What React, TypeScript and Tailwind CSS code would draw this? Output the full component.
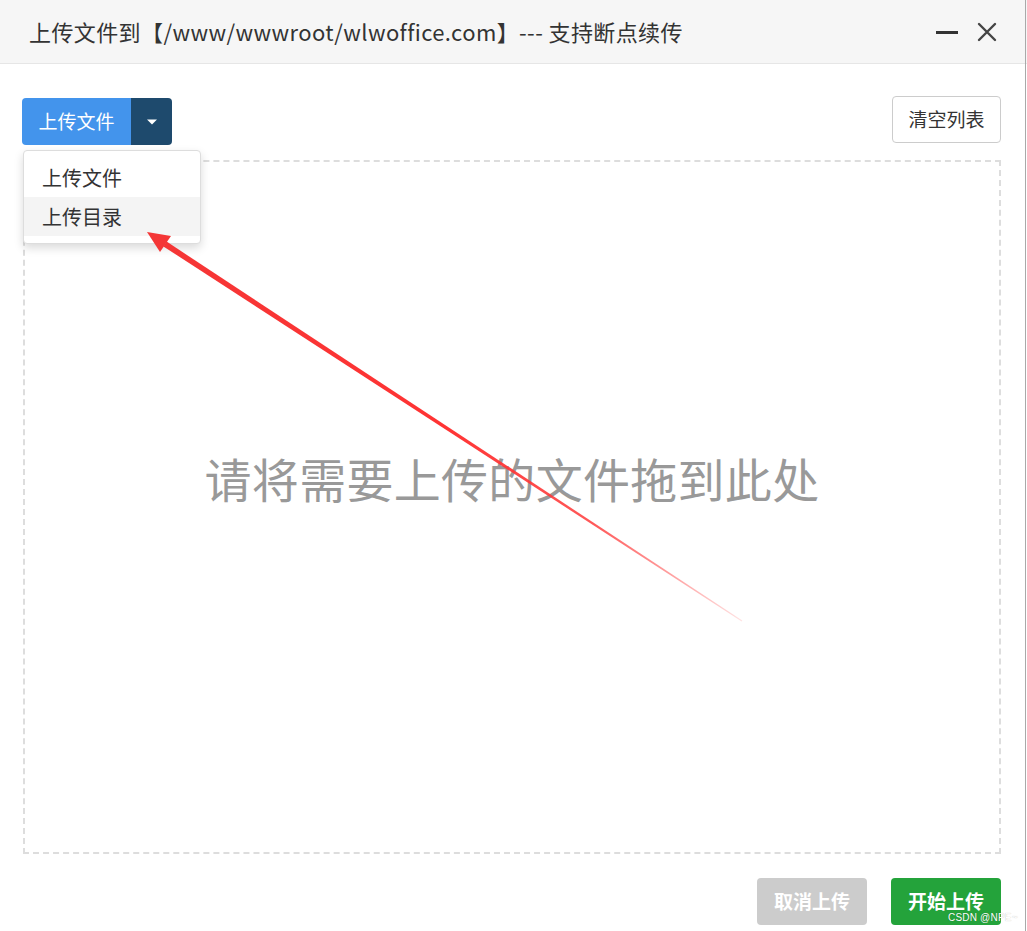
import React from "react";

const font = { fontFamily: '"Noto Sans CJK SC", "Noto Sans", sans-serif' };

export default function App() {
  return (
    <div className="relative w-[1027px] h-[931px] bg-white overflow-hidden" style={font}>
      {/* window right border */}
      <div className="absolute right-[1px] top-0 bottom-0 w-[1px] bg-[#a9a9a9]" />
      {/* title bar */}
      <div className="h-[64px] bg-[#f6f6f6] border-b border-[#e6e6e6] flex items-center pl-[29px] pr-[30px]">
        <div className="text-[22px] text-[#333] tracking-[0.4px]">上传文件到【/www/wwwroot/wlwoffice.com】--- 支持断点续传</div>
        <div className="ml-auto flex items-center gap-[18px]">
          <svg width="24" height="20" viewBox="0 0 24 20">
            <rect x="1" y="9" width="22" height="3" fill="#333" />
          </svg>
          <svg width="20" height="20" viewBox="0 0 20 20">
            <path d="M2 2 L18 18 M18 2 L2 18" stroke="#444" strokeWidth="2.4" strokeLinecap="round" />
          </svg>
        </div>
      </div>

      {/* body */}
      <div className="pl-[22px] pr-[26px]">
        <div className="flex items-start justify-between pt-[32px]">
          <div className="flex mt-[2px] h-[47px] rounded-[4px] overflow-hidden">
            <div className="w-[109px] bg-[#4394ec] text-white text-[19px] flex items-center justify-center">上传文件</div>
            <div className="w-[41px] bg-[#1e4a6d] flex items-center justify-center">
              <svg width="12" height="8" viewBox="0 0 12 8">
                <path d="M1 1.5 L11 1.5 L6 6.5 Z" fill="#fff" />
              </svg>
            </div>
          </div>
          <div className="w-[109px] h-[47px] border border-[#cccccc] rounded-[4px] text-[19px] text-[#333] flex items-center justify-center">清空列表</div>
        </div>

        <div className="mt-[15px] ml-[1px] w-[978px] h-[694px] border-2 border-dashed border-[#dddddd] flex justify-center pt-[288px]">
          <div className="text-[47px] leading-[1.2] text-[#999999] tracking-[0.3px]">请将需要上传的文件拖到此处</div>
        </div>

        <div className="flex justify-end gap-[24px] mt-[24px]">
          <div className="w-[110px] h-[47px] rounded-[4px] bg-[#cccccc] text-white text-[19px] font-bold flex items-center justify-center">取消上传</div>
          <div className="w-[110px] h-[47px] rounded-[4px] bg-[#24a33b] text-white text-[19px] font-bold flex items-center justify-center">开始上传</div>
        </div>
      </div>

      {/* dropdown menu */}
      <div className="absolute left-[23px] top-[150px] w-[178px] bg-white border border-[#dddddd] rounded-[4px] shadow-[0_4px_10px_rgba(0,0,0,0.15)] pt-[7px] pb-[7px]">
        <div className="h-[39px] flex items-center pl-[18px] text-[20px] text-[#333]">上传文件</div>
        <div className="h-[39px] flex items-center pl-[18px] text-[20px] text-[#333] bg-[#f4f4f4]">上传目录</div>
      </div>

      {/* red arrow */}
      <svg className="absolute left-0 top-0 pointer-events-none" width="1027" height="931" viewBox="0 0 1027 931">
        <defs>
          <linearGradient id="ag" gradientUnits="userSpaceOnUse" x1="742" y1="621" x2="147" y2="232">
            <stop offset="0" stopColor="#ff3b3b" stopOpacity="0.15" />
            <stop offset="0.25" stopColor="#ff3b3b" stopOpacity="0.85" />
            <stop offset="0.5" stopColor="#ff3333" stopOpacity="1" />
            <stop offset="1" stopColor="#f43636" stopOpacity="1" />
          </linearGradient>
        </defs>
        <polygon points="166.6,241.6 163.4,246.4 741.7,621.4 742.3,620.6" fill="url(#ag)" />
        <polygon points="147,232 171,236 160,252" fill="#f43636" />
      </svg>

      {/* watermark */}
      <div className="absolute left-[948px] top-[910px] text-[10px] text-white tracking-[0.2px]" style={{ fontFamily: '"Liberation Sans", Arial, sans-serif', textShadow: "0 0 1px rgba(0,0,0,0.3)" }}>
        CSDN @NPE~
      </div>
    </div>
  );
}
